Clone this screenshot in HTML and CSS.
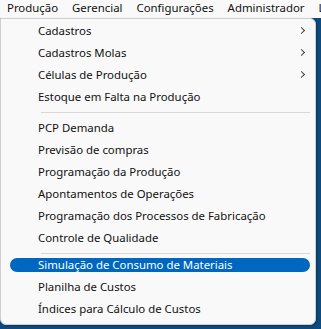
FILE: index.html
```html
<!DOCTYPE html>
<html lang="pt">
<head>
<meta charset="utf-8">
<link rel="stylesheet" href="styles.css">
</head>
<body>
<div class="window">
  <nav class="menubar">
    <span class="top">Produção</span>
    <span class="top">Gerencial</span>
    <span class="top">Configurações</span>
    <span class="top">Administrador</span>
    <span class="top">L</span>
  </nav>
  <div class="content">
    <div class="popup">
      <ul class="group">
        <li class="item sub">Cadastros<span class="chev"></span></li>
        <li class="item sub">Cadastros Molas<span class="chev"></span></li>
        <li class="item sub">Células de Produção<span class="chev"></span></li>
        <li class="item">Estoque em Falta na Produção</li>
      </ul>
      <div class="sep"></div>
      <ul class="group">
        <li class="item">PCP Demanda</li>
        <li class="item">Previsão de compras</li>
        <li class="item">Programação da Produção</li>
        <li class="item">Apontamentos de Operações</li>
        <li class="item">Programação dos Processos de Fabricação</li>
        <li class="item">Controle de Qualidade</li>
      </ul>
      <div class="sep"></div>
      <ul class="group">
        <li class="item active">Simulação de Consumo de Materiais</li>
        <li class="item">Planilha de Custos</li>
        <li class="item">Índices para Cálculo de Custos</li>
      </ul>
    </div>
  </div>
</div>
</body>
</html>
```
FILE: styles.css
```css
html, body {
  margin: 0;
  padding: 0;
}
body {
  width: 321px;
  height: 329px;
  overflow: hidden;
  font-family: "Noto Sans", "Open Sans", sans-serif;
  font-size: 11.4px;
  color: #111;
  background: #f9f9f9;
}
.window {
  display: flex;
  flex-direction: column;
  height: 329px;
}
.menubar {
  display: flex;
  height: 18px;
  align-items: center;
  padding-left: 7px;
  gap: 14px;
  background: #f9f9f9;
  white-space: nowrap;
  line-height: 16px;
  padding-bottom: 2px;
  box-sizing: border-box;
}
.content {
  flex: 1;
  position: relative;
  background: #0d4b7e;
}
.popup {
  position: absolute;
  left: 0;
  top: 0;
  width: 316px;
  height: 307px;
  background: #f9f9f9;
  border: 1px solid #cfcfcf;
  border-radius: 0 6px 6px 6px;
  box-shadow: 1px 1px 2px rgba(0,0,0,0.3);
  padding-top: 1px;
  box-sizing: border-box;
}
.group {
  list-style: none;
  margin: 0;
  padding: 0;
}
.item {
  position: relative;
  height: 22px;
  line-height: 22px;
  padding-left: 28px;
  margin: 0 5px 0 9px;
  border-radius: 4px;
  white-space: nowrap;
}
.item.active {
  background: #0067c0;
  color: #fff;
  height: 14px;
  line-height: 14px;
  margin-top: 4px;
  margin-bottom: 4px;
  border-radius: 7px;
}
.chev {
  position: absolute;
  right: 6px;
  top: 8px;
  width: 4px;
  height: 4px;
  border-right: 1.2px solid #444;
  border-top: 1.2px solid #444;
  transform: rotate(45deg);
}
.sep {
  height: 1px;
  background: #d8d8d8;
  margin: 4px 5px 4px 40px;
}
```
